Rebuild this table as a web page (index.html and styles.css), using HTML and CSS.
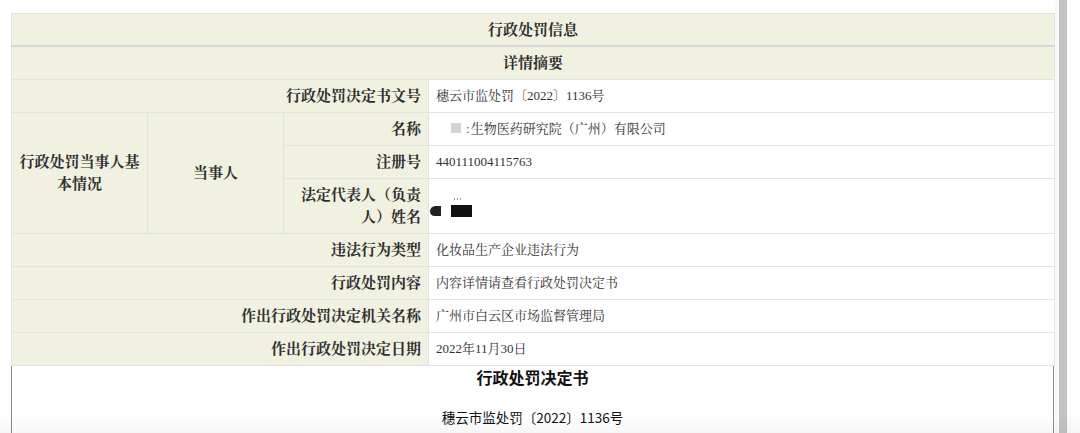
FILE: index.html
```html
<!DOCTYPE html>
<html lang="zh-CN">
<head>
<meta charset="utf-8">
<title>行政处罚信息</title>
<link rel="stylesheet" href="styles.css">
</head>
<body>
<div class="page">
  <table class="info">
    <colgroup>
      <col class="c1"><col class="c2"><col class="c3"><col class="c4">
    </colgroup>
    <tr><th class="title" colspan="4">行政处罚信息</th></tr>
    <tr><th class="sub" colspan="4">详情摘要</th></tr>
    <tr><th class="label" colspan="3">行政处罚决定书文号</th><td class="val">穗云市监处罚〔2022〕1136号</td></tr>
    <tr>
      <th class="label center" rowspan="3">行政处罚当事人基<br>本情况</th>
      <th class="label center" rowspan="3">当事人</th>
      <th class="label">名称</th>
      <td class="val"><span class="redact-sq"></span><span class="cut">:</span>生物医药研究院（广州）有限公司</td>
    </tr>
    <tr><th class="label">注册号</th><td class="val">440111004115763</td></tr>
    <tr><th class="label">法定代表人（负责人）姓名</th><td class="val"><span class="redact"><span class="blob1"></span><span class="blob2"><span class="dots"></span></span></span></td></tr>
    <tr><th class="label" colspan="3">违法行为类型</th><td class="val">化妆品生产企业违法行为</td></tr>
    <tr><th class="label" colspan="3">行政处罚内容</th><td class="val">内容详情请查看行政处罚决定书</td></tr>
    <tr><th class="label" colspan="3">作出行政处罚决定机关名称</th><td class="val">广州市白云区市场监督管理局</td></tr>
    <tr><th class="label" colspan="3">作出行政处罚决定日期</th><td class="val">2022年11月30日</td></tr>
  </table>
  <div class="doc">
    <h2 class="doc-title">行政处罚决定书</h2>
    <p class="doc-no">穗云市监处罚〔2022〕1136号</p>
  </div>
</div>
<div class="scrollbar"><div class="thumb"></div></div>
<div class="fade"></div>
</body>
</html>
```

FILE: styles.css
```css
html, body {
  margin: 0;
  padding: 0;
  background: #fff;
  overflow: hidden;
}
body {
  width: 1080px;
  height: 433px;
  font-family: "Liberation Serif", "Noto Serif CJK SC", "Noto Sans CJK SC", serif;
  color: #333;
}
.page {
  padding: 13px 0 0 11px;
}
.info {
  width: 1043px;
  border-collapse: collapse;
  table-layout: fixed;
}
.c1 { width: 136px; }
.c2 { width: 136px; }
.c3 { width: 145px; }
.c4 { width: 626px; }
.info th, .info td {
  border: 1px solid #e2e2e2;
  padding: 5px 7px;
  line-height: 22px;
  vertical-align: middle;
}
.info th {
  background: #f1f1e2;
  font-size: 15px;
  font-weight: bold;
  color: #2f2f2f;
  text-align: right;
}
.info th.title, .info th.sub {
  text-align: center;
}
.info th.title {
  border-bottom: 2px solid #d6d6d6;
  padding: 5px 7px 4px;
}
.info th.center {
  text-align: center;
}
.info td.val {
  background: #fff;
  font-size: 13px;
  color: #333;
  text-align: left;
}
.redact-sq {
  display: inline-block;
  width: 10px;
  height: 10px;
  background: #d2d2d2;
  margin: 0 5px 0 15px;
  vertical-align: 0;
}
.cut {
  color: #555;
  margin-right: 1px;
}
.redact {
  display: inline-flex;
  align-items: center;
  gap: 10px;
  margin-left: -6px;
  margin-top: 9px;
  vertical-align: middle;
  filter: blur(0.4px);
}
.blob1 {
  display: inline-block;
  width: 11px;
  height: 10px;
  background: #222;
  border-radius: 7px 0 0 6px;
}
.blob2 {
  position: relative;
  display: inline-block;
  width: 21px;
  height: 12px;
  background: #111;
}
.dots {
  position: absolute;
  left: 3px;
  top: -7px;
  width: 8px;
  height: 2px;
  background: repeating-linear-gradient(to right, #999 0 1px, transparent 1px 3px);
}
.doc {
  width: 1041px;
  height: 80px;
  border-left: 1px solid #8a8a8a;
  border-right: 1px solid #8a8a8a;
  font-family: "Noto Sans CJK SC", "Noto Sans", sans-serif;
  text-align: center;
  color: #111;
}
.doc-title {
  margin: 0;
  padding-top: 0;
  font-size: 16px;
  line-height: 22px;
  font-weight: bold;
}
.doc-no {
  margin: 19px 0 0;
  font-size: 13.5px;
  line-height: 20px;
}
.scrollbar {
  position: absolute;
  top: 0;
  left: 1055px;
  width: 16px;
  height: 433px;
  background: #fbfbfb;
}
.thumb {
  position: absolute;
  left: 4px;
  top: 0;
  width: 8px;
  height: 433px;
  background: #c3c3c3;
}
.fade {
  position: absolute;
  left: 0;
  top: 415px;
  width: 1080px;
  height: 18px;
  background: linear-gradient(to bottom, rgba(0,0,0,0), rgba(0,0,0,0.035));
  pointer-events: none;
}
```
